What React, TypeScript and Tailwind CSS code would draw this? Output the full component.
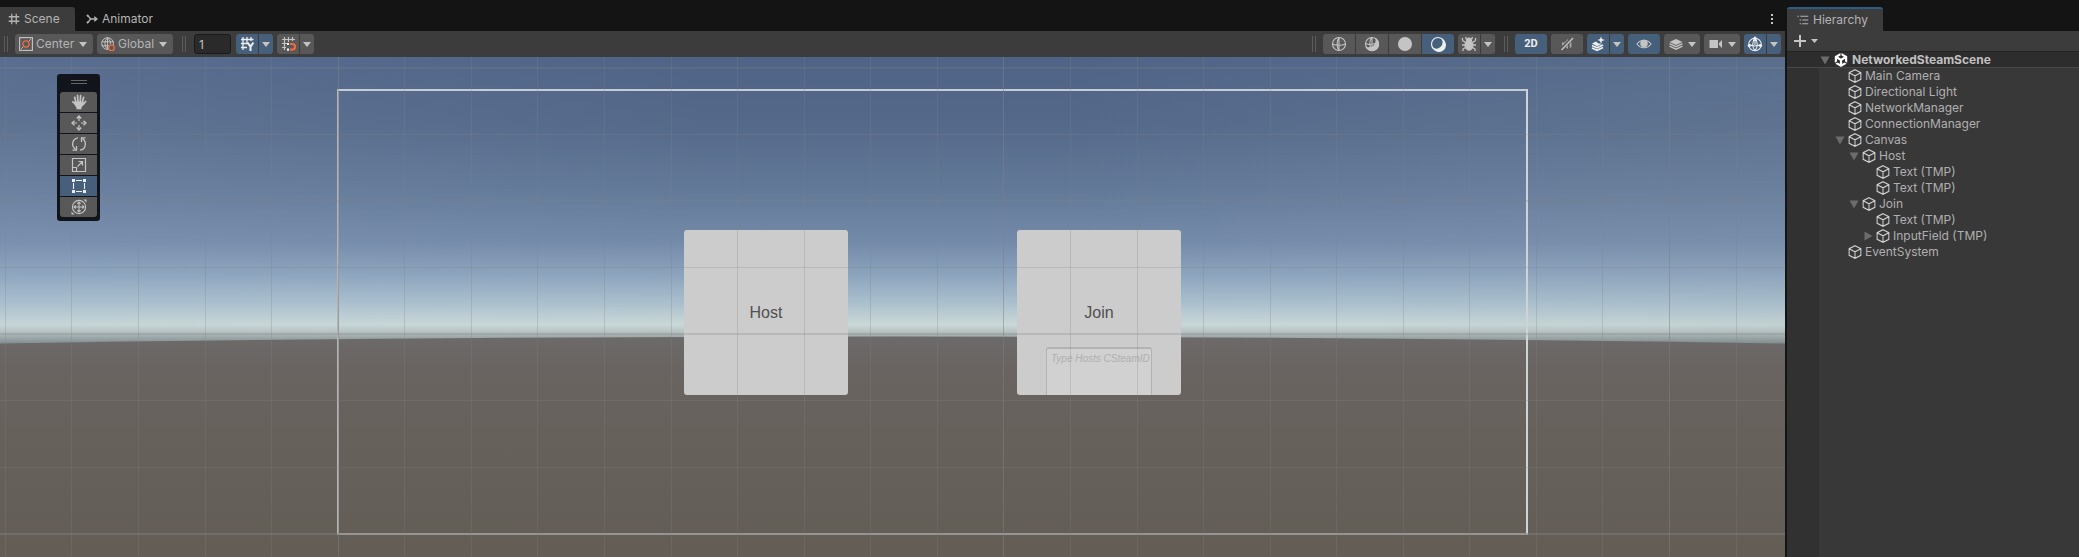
import React from "react";
import { SiUnity } from "react-icons/si";

type IconProps = { className?: string; children: React.ReactNode; size?: string };

function Icon({ children, size = "size-4", className = "" }: IconProps) {
  return (
    <svg viewBox="0 0 16 16" fill="none" stroke="currentColor" strokeWidth="1.1" className={`block shrink-0 ${size} ${className}`} aria-hidden="true">
      {children}
    </svg>
  );
}

const HashIcon = () => (
  <Icon size="size-3">
    <path d="M5 1v14M11 1v14M1 5h14M1 11h14" strokeWidth="1.7" />
  </Icon>
);

const AnimatorIcon = () => (
  <Icon size="size-3">
    <path d="M2 3.500c2 0 2.500 4.500 5 4.500h7M2 12.500c2 0 2.500-4.500 5-4.500M11 5l3.500 3-3.500 3" strokeWidth="1.9" />
    <circle cx="2.200" cy="3.500" r="1" fill="currentColor" />
    <circle cx="2.200" cy="12.500" r="1" fill="currentColor" />
  </Icon>
);

const HierarchyIcon = () => (
  <Icon size="size-3">
    <path d="M4.500 3H15M7 8h8M7 13h8" strokeWidth="1.600" />
    <path d="M0.500 3h2M3.500 8h2M3.500 13h2" strokeWidth="1.600" />
  </Icon>
);

const PivotIcon = () => (
  <Icon size="size-3.5">
    <rect x="0.700" y="0.700" width="14.600" height="14.600" strokeWidth="1.300" />
    <path d="M2.500 13.500l2.500-2.500M11 5l2.500-2.500" />
    <circle cx="8" cy="8" r="3.600" stroke="#f0693f" strokeWidth="1.500" />
  </Icon>
);

const GlobalIcon = () => (
  <Icon size="size-3.5">
    <circle cx="7.500" cy="7.500" r="6.700" />
    <path d="M7.500 1v13M1 5.500h13M1 10h8M7.500 1C3.500 4 3.500 11 7.500 14M7.500 1c3 2 3.500 5 3.200 7.500" />
    <circle cx="12" cy="12.500" r="3.200" fill="#585858" stroke="#f0693f" strokeWidth="1.500" />
  </Icon>
);

const GridAxisIcon = () => (
  <Icon>
    <path d="M4 1v13M8 1v6M12 1v4M2 3.500h12.500M2 7.500h7M2 11.500h6" strokeWidth="1.300" />
    <path d="M8.500 6.500l3 4.200 3-4.200M11.500 10.500v4.500" strokeWidth="2" />
  </Icon>
);

const SnapIcon = () => (
  <Icon>
    <path d="M4.500 1v13M8.500 1v5M12.500 1v4M2 3.500h13M2 7.500h5M2 11.500h4" strokeWidth="1.200" />
    <path d="M10 8h2.300a2.700 2.700 0 0 1 0 5.600H10" stroke="#f0693f" strokeWidth="2.200" />
    <path d="M7 8h2M7 13.600h2" stroke="#f4f4f4" strokeWidth="2.200" />
  </Icon>
);

const WireSphereIcon = () => (
  <Icon>
    <circle cx="8" cy="8" r="6.500" />
    <path d="M8 1.500C5.500 4.500 5.500 11.500 8 14.500M1.500 8c3.500 1.700 9.500 1.700 13 0M8 1.500v13" />
  </Icon>
);

const ShadedWireIcon = () => (
  <Icon>
    <circle cx="8" cy="8" r="6.500" />
    <path d="M12 3a6.500 6.500 0 1 1-9.500 8.500c5.500 1.500 10.500-2.500 9.500-8.500z" fill="currentColor" />
    <path d="M7.500 1.500C5.500 5 5.500 10 7.500 14M1.500 7.500c3 1.300 6 1.300 9.500 0M8 1.500v11" />
  </Icon>
);

const SolidSphereIcon = () => (
  <Icon>
    <circle cx="8" cy="8" r="7" fill="currentColor" stroke="none" />
  </Icon>
);

const LitSphereIcon = () => (
  <Icon>
    <circle cx="8" cy="8" r="6.500" strokeWidth="1.200" />
    <path d="M12.500 3.500a6.500 6.500 0 1 1-9 9c2 1 5.300.9 7.500-1.300s2.500-5.400 1.500-7.700z" fill="currentColor" />
  </Icon>
);

const BugIcon = () => (
  <Icon>
    <path d="M5.500 4.500a2.500 2.500 0 0 1 5 0z" fill="currentColor" />
    <ellipse cx="8" cy="9.200" rx="4" ry="5" fill="currentColor" />
    <path d="M5.500 3.500L4.500 1M10.500 3.500l1-2.500M4.500 6.500L1.500 4.500M1.500 4.500V2M11.500 6.500l3-2M14.500 4.500V2M4 9H1M12 9h3M4.500 11.500L2 13v2M11.500 11.500L14 13v2" strokeWidth="1.300" />
  </Icon>
);

const MuteIcon = () => (
  <Icon>
    <path d="M3 6.500h2.500L9 3v10L5.500 10H3z" fill="currentColor" stroke="none" opacity=".75" />
    <path d="M11.500 5.500v6" strokeWidth="1.800" opacity=".75" />
    <path d="M2 13.500L13.500 2" stroke="#585858" strokeWidth="3.500" />
    <path d="M2.500 14L14 2" strokeWidth="1.300" />
  </Icon>
);

const EffectsIcon = () => (
  <Icon>
    <path d="M2 7.500l4-2 2.500 2 3.500.3-5 2.400z" fill="currentColor" stroke="none" />
    <path d="M2 9.500l5 2.300 6-2.800M2 12l5 2.300 6-2.800" strokeWidth="1.700" />
    <path d="M11 .5l1 2.500 2.800 1L12 5l-1 2.800L10 5 7.500 4 10 3z" fill="currentColor" stroke="none" />
  </Icon>
);

const EyeIcon = () => (
  <Icon>
    <path d="M1 8c3.500-5 10.500-5 14 0-3.500 5-10.500 5-14 0z" />
    <circle cx="8" cy="7.500" r="3.200" fill="currentColor" />
  </Icon>
);

const LayersIcon = () => (
  <Icon>
    <path d="M1.500 6L8 3l6.500 3L8 9z" fill="currentColor" stroke="none" />
    <path d="M1.500 7.700L8 10.700l6.500-3M1.500 10.200L8 13.200l6.500-3" strokeWidth="1.300" />
  </Icon>
);

const CameraIcon = () => (
  <Icon>
    <path d="M1.500 4H10v8H1.500zM11 7l3-3v8l-3-3z" fill="currentColor" stroke="none" />
  </Icon>
);

const GizmoIcon = () => (
  <Icon>
    <circle cx="8" cy="8.500" r="6.300" />
    <path d="M8 2C5 5 5 12 8 14.500M8 2c3 3 3 10 0 12.500M2 8.500c3.500 1.800 8.500 1.800 12 0M8 2v7" />
    <circle cx="8" cy="2.200" r="1.600" fill="currentColor" stroke="none" />
    <circle cx="2.300" cy="9.500" r="1.600" fill="currentColor" stroke="none" />
    <circle cx="13.500" cy="9.500" r="1.600" fill="currentColor" stroke="none" />
  </Icon>
);

const HandIcon = () => (
  <Icon>
    <path d="M4.900 8.500L3.700 3.300M7 8L6.500 1.300M9.200 8l.4-6.500M11.300 8.500l1.300-5.200M12 10.700l2.600-3.200M5.500 9.500L1.800 8" strokeWidth="1.700" strokeLinecap="round" />
    <path d="M4.100 7.500h8.200l.7 2.500-2.500 3.500v1.800h-5v-1.500L2 8.500z" fill="currentColor" stroke="none" />
  </Icon>
);

const MoveIcon = () => (
  <Icon>
    <path d="M8 1.500V6M8 10v4.500M1.500 8H6M10 8h4.500" strokeWidth="1.200" />
    <path d="M5.800 3.500L8 1l2.200 2.500M5.800 12.500L8 15l2.200-2.500M3.500 5.800L1 8l2.500 2.200M12.500 5.800L15 8l-2.500 2.200" strokeWidth="1.300" />
  </Icon>
);

const RotateIcon = () => (
  <Icon>
    <path d="M7 1.800C1 2.800 0 10 4.500 13.500M9 14.200c6-1 7-8.200 2.500-11.700" strokeWidth="1.300" />
    <path d="M1.500 14.200h4V10M14.500 1.800h-4V6" strokeWidth="1.300" />
  </Icon>
);

const ScaleIcon = () => (
  <Icon>
    <path d="M1.500 1.500h13v13h-13zM1.500 10.500h4v4M6.500 9.500l5-5M7.500 4.500h4v4" strokeWidth="1.200" />
  </Icon>
);

const RectIcon = () => (
  <Icon>
    <path d="M5 2.500h6M5 13.500h6M2.500 5v6M13.500 5v6" />
    <path d="M1 1h3v3H1zM12 1h3v3h-3zM1 12h3v3H1zM12 12h3v3h-3z" fill="currentColor" stroke="none" />
  </Icon>
);

const TransformIcon = () => (
  <Icon>
    <circle cx="8" cy="8" r="6.600" />
    <path d="M8 3v10M3 8h10M6.300 4.800L8 3l1.700 1.800M6.300 11.200L8 13l1.700-1.800M4.800 6.300L3 8l1.800 1.700M11.200 6.300L13 8l-1.800 1.700" />
    <path d="M12.500.5h3v3zM.5 12.500v3h3z" fill="currentColor" stroke="none" />
  </Icon>
);

const CubeIcon = () => (
  <Icon size="size-3.5">
    <path d="M8 .8l6.700 3.400v7.600L8 15.200 1.300 11.800V4.200zM1.300 4.200L8 7.800l6.700-3.600M8 7.800v7.400" strokeWidth="1.200" />
  </Icon>
);

function Caret({ className = "text-[#c4c4c4]" }: { className?: string }) {
  return (
    <svg viewBox="0 0 8 5" className={`block h-[5px] w-2 shrink-0 ${className}`} aria-hidden="true">
      <path d="M0 0h8L4 5z" fill="currentColor" />
    </svg>
  );
}

function Grip() {
  return <span className="block h-4 w-1 shrink-0 border-x border-[#5c5c5c]" />;
}

type ToolProps = { label: string; active?: boolean; className?: string; children: React.ReactNode };

function Tool({ label, active, className = "w-8", children }: ToolProps) {
  return (
    <button
      type="button"
      aria-label={label}
      className={`flex h-5 shrink-0 items-center justify-center ${active ? "bg-[#46607c] text-[#eeeeee]" : "bg-[#585858] text-[#c4c4c4]"} ${className}`}
    >
      {children}
    </button>
  );
}

function SplitTool({ label, active, children }: ToolProps) {
  return (
    <div className="flex gap-px overflow-hidden rounded-[3px]">
      <Tool label={label} active={active} className="w-[22px]">{children}</Tool>
      <Tool label={`${label} options`} active={active} className="w-3.5">
        <Caret />
      </Tool>
    </div>
  );
}

function Picker({ label, icon, options }: { label: string; icon: React.ReactNode; options: string[] }) {
  return (
    <label className="flex h-5 items-center rounded-[3px] bg-[#585858] pr-1.5 pl-1 text-[#c4c4c4]">
      {icon}
      <select aria-label={label} className="ml-[3px] appearance-none bg-transparent pr-1 text-xs text-[#b4b4b4] outline-none">
        {options.map((o) => (
          <option key={o}>{o}</option>
        ))}
      </select>
      <Caret />
    </label>
  );
}

function SceneToolbar() {
  return (
    <div className="flex h-[26px] shrink-0 items-center justify-between bg-[#3c3c3c] px-1">
      <div className="flex items-center">
        <Grip />
        <div className="ml-[7px] flex items-center gap-1">
          <Picker label="Tool handle position" icon={<PivotIcon />} options={["Center", "Pivot"]} />
          <Picker label="Tool handle rotation" icon={<GlobalIcon />} options={["Global", "Local"]} />
        </div>
        <div className="ml-[9px]"><Grip /></div>
        <input
          aria-label="Grid size"
          defaultValue="1"
          className="ml-2 h-5 w-[37px] rounded-[3px] border border-[#1a1a1a] bg-[#2a2a2a] px-1 text-xs text-[#c0c0c0] outline-none"
        />
        <div className="ml-[5px] flex gap-1">
          <SplitTool label="Grid axis" active><GridAxisIcon /></SplitTool>
          <SplitTool label="Grid snapping"><SnapIcon /></SplitTool>
        </div>
      </div>
      <div className="flex items-center">
        <Grip />
        <div className="mr-1 ml-[7px] flex gap-px overflow-hidden rounded-[3px]">
          <Tool label="Wireframe"><WireSphereIcon /></Tool>
          <Tool label="Shaded wireframe"><ShadedWireIcon /></Tool>
          <Tool label="Unlit"><SolidSphereIcon /></Tool>
          <Tool label="Shaded" active><LitSphereIcon /></Tool>
        </div>
        <SplitTool label="Debug draw mode"><BugIcon /></SplitTool>
        <div className="mr-[7px] ml-[9px]"><Grip /></div>
        <div className="flex gap-1">
          <Tool label="2D" active className="w-8 rounded-[3px] font-[Roboto,sans-serif] text-[11px] font-bold">2D</Tool>
          <Tool label="Audio" className="w-8 rounded-[3px]"><MuteIcon /></Tool>
          <SplitTool label="Effects" active><EffectsIcon /></SplitTool>
          <Tool label="Scene visibility" active className="w-8 rounded-[3px]">
            <span className="text-[#c4c4c4]"><EyeIcon /></span>
          </Tool>
          <Tool label="Layers" className="w-9 gap-1 rounded-[3px]"><LayersIcon /><Caret /></Tool>
          <Tool label="Camera" className="w-9 gap-1 rounded-[3px]"><CameraIcon /><Caret /></Tool>
          <SplitTool label="Gizmos" active><GizmoIcon /></SplitTool>
        </div>
      </div>
    </div>
  );
}

const columns = [5, 71, 138, 205, 271, 404, 471, 537, 604, 671, 737, 804, 870, 937, 1070, 1137, 1203, 1270, 1336, 1403, 1469, 1536, 1602, 1736];
const majorColumns = [338, 1003, 1669];
const rows = [77, 210, 343, 410];
const majorRows = [11, 144, 277];

function Sky() {
  return (
    <svg viewBox="0 0 1785 500" preserveAspectRatio="none" className="absolute inset-0 size-full" aria-hidden="true">
      <defs>
        <linearGradient id="sky" gradientUnits="userSpaceOnUse" x1="0" y1="0" x2="0" y2="290">
          <stop offset="0" stopColor="#4e6386" />
          <stop offset=".24" stopColor="#556a8a" />
          <stop offset=".46" stopColor="#637998" />
          <stop offset=".64" stopColor="#748aa9" />
          <stop offset=".75" stopColor="#8ca3bd" />
          <stop offset=".85" stopColor="#abc0cd" />
          <stop offset=".923" stopColor="#cad8d7" />
          <stop offset=".945" stopColor="#bac5c4" />
          <stop offset=".985" stopColor="#838c8c" />
          <stop offset="1" stopColor="#6f7575" />
        </linearGradient>
        <linearGradient id="ground" gradientUnits="userSpaceOnUse" x1="0" y1="279" x2="0" y2="500">
          <stop offset="0" stopColor="#6d6a6b" />
          <stop offset=".15" stopColor="#696461" />
          <stop offset=".45" stopColor="#66615b" />
          <stop offset="1" stopColor="#635d56" />
        </linearGradient>
        <linearGradient id="sides" x1="0" x2="1" y1="0" y2="0">
          <stop offset="0" stopColor="#a9bdd6" stopOpacity=".12" />
          <stop offset=".4" stopColor="#a9bdd6" stopOpacity="0" />
          <stop offset=".6" stopColor="#a9bdd6" stopOpacity="0" />
          <stop offset="1" stopColor="#98a9b4" stopOpacity=".15" />
        </linearGradient>
      </defs>
      <rect width="1785" height="300" fill="url(#sky)" />
      <rect width="1785" height="300" fill="url(#sides)" />
      <path d="M0 286.500Q892 272.500 1785 286.500V500H0z" fill="url(#ground)" />
    </svg>
  );
}

function Grid() {
  return (
    <svg className="pointer-events-none absolute inset-0 size-full" aria-hidden="true" shapeRendering="crispEdges">
      <g fill="#808080" fillOpacity=".27">
        {columns.map((x) => <rect key={x} x={x} y="0" width="1" height="100%" />)}
        {rows.map((y) => <rect key={y} x="0" y={y} width="100%" height="1" />)}
        {majorRows.map((y) => <rect key={y} x="0" y={y - 1} width="100%" height="2" />)}
      </g>
      <g fill="#808080" fillOpacity=".5">
        {majorColumns.map((x) => <rect key={x} x={x} y="0" width="1" height="100%" />)}
        <rect x="0" y="476" width="100%" height="2" />
      </g>
    </svg>
  );
}

function ToolPalette() {
  return (
    <div className="absolute top-[17px] left-[57px] flex flex-col items-center rounded-[3px] bg-[#11151b] px-[3px] pt-1.5 pb-1">
      <span className="mb-2 h-1 w-4 border-y border-[#62666b]" />
      <div className="flex flex-col gap-px overflow-hidden rounded-[3px]">
        <Tool label="View tool" className="w-[37px]"><HandIcon /></Tool>
        <Tool label="Move tool" className="w-[37px]"><MoveIcon /></Tool>
        <Tool label="Rotate tool" className="w-[37px]"><RotateIcon /></Tool>
        <Tool label="Scale tool" className="w-[37px]"><ScaleIcon /></Tool>
        <Tool label="Rect tool" active className="w-[37px]"><RectIcon /></Tool>
        <Tool label="Transform tool" className="w-[37px]"><TransformIcon /></Tool>
      </div>
    </div>
  );
}

function SceneView() {
  return (
    <main className="relative flex-1 overflow-hidden">
      <Sky />
      <div className="absolute top-8 left-[337px] flex h-[446px] w-[1191px] items-start justify-center gap-[169px] border-2 border-t-[#c5ccd6] border-r-[#d0d3d6] border-b-[#aeaba8] border-l-[#b4b5b6] pt-[139px] font-['Liberation_Sans',sans-serif]">
        <button type="button" className="h-[165px] w-[164px] rounded-[3px] bg-[#cccccc] text-base text-[#505050]">
          Host
        </button>
        <div className="flex h-[165px] w-[164px] flex-col items-center justify-between rounded-[3px] bg-[#cccccc]">
          <button type="button" className="mt-[71px] text-base text-[#505050]">Join</button>
          <input
            aria-label="Host CSteamID"
            placeholder="Type Hosts CSteamID"
            className="h-12 w-[106px] rounded-t-[3px] border border-t-2 border-b-0 border-[#b3b3b3] bg-[#d1d1d1] pb-[27px] pl-1 text-[10px] italic outline-none placeholder:text-[#afafaf]"
          />
        </div>
      </div>
      <Grid />
      <ToolPalette />
    </main>
  );
}

type Node = { name: string; depth: number; state?: "open" | "closed" };

const nodes: Node[] = [
  { name: "Main Camera", depth: 1 },
  { name: "Directional Light", depth: 1 },
  { name: "NetworkManager", depth: 1 },
  { name: "ConnectionManager", depth: 1 },
  { name: "Canvas", depth: 1, state: "open" },
  { name: "Host", depth: 2, state: "open" },
  { name: "Text (TMP)", depth: 3 },
  { name: "Text (TMP)", depth: 3 },
  { name: "Join", depth: 2, state: "open" },
  { name: "Text (TMP)", depth: 3 },
  { name: "InputField (TMP)", depth: 3, state: "closed" },
  { name: "EventSystem", depth: 1 },
];

const indent = ["pl-0", "pl-4", "pl-[30px]", "pl-11"];

function Fold({ state }: { state?: "open" | "closed" }) {
  return (
    <svg viewBox="0 0 10 10" className="block size-2.5 shrink-0" aria-hidden="true">
      {state === "open" && <path d="M.5 1.500h9L5 9.500z" fill="#6c6c6c" />}
      {state === "closed" && <path d="M1.500.5v9l8-4.500z" fill="#6c6c6c" />}
    </svg>
  );
}

function Hierarchy() {
  return (
    <aside className="flex w-[292px] shrink-0 flex-col">
      <div className="flex h-[31px] shrink-0 items-end bg-[#141414]">
        <div className="flex h-6 w-24 items-center gap-1 rounded-t-[3px] border-t-2 border-[#2c5d87] bg-[#3c3c3c] pl-2.5 text-[#b4b4b4]">
          <HierarchyIcon />
          Hierarchy
        </div>
      </div>
      <div className="flex h-5 shrink-0 items-center bg-[#3c3c3c] pl-[7px] text-[#c4c4c4]">
        <button type="button" aria-label="Create" className="flex items-center gap-[5px]">
          <svg viewBox="0 0 12 12" className="size-3" aria-hidden="true">
            <path d="M6 0v12M0 6h12" stroke="currentColor" strokeWidth="2" />
          </svg>
          <svg viewBox="0 0 7 4" className="h-1 w-[7px]" aria-hidden="true">
            <path d="M0 0h7L3.500 4z" fill="currentColor" />
          </svg>
        </button>
      </div>
      <div className="flex h-[17px] shrink-0 items-center gap-1 border-t border-b border-t-[#232323] border-b-[#484848] bg-[#2d2d2d] pl-[33px] font-bold text-[#c0c0c0]">
        <Fold state="open" />
        <SiUnity className="size-3.5 shrink-0 text-white" aria-hidden="true" />
        <span>NetworkedSteamScene</span>
      </div>
      <div className="flex flex-1">
        <div className="w-8 shrink-0 bg-[#313131]" />
        <ul className="flex-1 bg-[#383838]">
          {nodes.map((n, i) => (
            <li key={i} className={`flex h-4 items-center gap-[3px] leading-4 text-[#b0b0b0] ${indent[n.depth]}`}>
              <Fold state={n.state} />
              <span className="text-[#d0d0d0]"><CubeIcon /></span>
              {n.name}
            </li>
          ))}
        </ul>
      </div>
    </aside>
  );
}

export default function App() {
  return (
    <div className="flex min-h-screen bg-[#141414] font-[Inter,sans-serif] text-xs leading-4">
      <section className="mr-0.5 flex min-w-0 flex-1 flex-col">
        <div className="flex h-[31px] shrink-0 items-end bg-[#141414] text-[#b4b4b4]">
          <div className="flex h-6 w-[75px] items-center gap-1 rounded-tr-[3px] bg-[#3c3c3c] pl-2">
            <HashIcon />
            Scene
          </div>
          <div className="flex h-6 items-center gap-1 pl-[11px]">
            <AnimatorIcon />
            Animator
          </div>
          <button type="button" aria-label="Scene menu" className="mr-3 ml-auto flex h-6 flex-col items-center justify-center gap-0.5">
            <span className="size-0.5 bg-[#c4c4c4]" />
            <span className="size-0.5 bg-[#c4c4c4]" />
            <span className="size-0.5 bg-[#c4c4c4]" />
          </button>
        </div>
        <SceneToolbar />
        <SceneView />
      </section>
      <Hierarchy />
    </div>
  );
}
